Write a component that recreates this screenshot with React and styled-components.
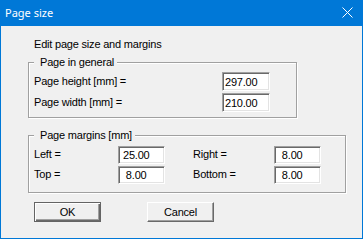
import React from "react";
import styled, { createGlobalStyle } from "styled-components";

const Global = createGlobalStyle`
  html, body {
    margin: 0;
    padding: 0;
    background: #ffffff;
  }
  * {
    box-sizing: border-box;
  }
`;

const Window = styled.div`
  width: 363px;
  height: 239px;
  border: 1px solid #0078d7;
  border-top: none;
  background: #f0f0f0;
  display: flex;
  flex-direction: column;
  font-family: "Liberation Sans", Arial, sans-serif;
  font-size: 11px;
  letter-spacing: -0.2px;
  color: #000;
`;

const TitleBar = styled.div`
  height: 26px;
  background: #0078d7;
  display: flex;
  align-items: center;
  justify-content: space-between;
  padding: 0 9px 1px 4px;
  color: #fff;
  font-family: "Noto Sans", "Liberation Sans", sans-serif;
  font-size: 11px;
  letter-spacing: 0;
`;

const Body = styled.div`
  flex: 1;
  display: flex;
  flex-direction: column;
  align-items: flex-start;
  padding-left: 27px;
`;

const Heading = styled.div`
  margin: 12px 0 0 6px;
  line-height: 13px;
`;

const Group = styled.fieldset`
  margin: ${(p) => p.$top}px 0 0 0;
  width: ${(p) => p.$width}px;
  min-inline-size: 0;
  padding: ${(p) => p.$pad};
  border: 1px solid #a0a0a0;
  box-shadow: 1px 1px 0 #fff, inset 1px 1px 0 #fff;
`;

const Legend = styled.legend`
  padding: 0 3px 0 6px;
  margin: 0;
  line-height: 13px;
  background: #f0f0f0;
`;

const Grid = styled.div`
  display: grid;
  grid-template-columns: ${(p) => p.$cols};
  grid-auto-rows: ${(p) => p.$row}px;
  row-gap: 2px;
  align-items: center;
`;

const Label = styled.span`
  line-height: 13px;
  padding-bottom: ${(p) => (p.$raise ? 2 : 0)}px;
`;

const Field = styled.input`
  width: ${(p) => p.$width}px;
  height: 100%;
  margin: 0;
  padding: 0 0 0 ${(p) => p.$indent}px;
  font: inherit;
  letter-spacing: inherit;
  color: #000;
  background: #fff;
  border: 1px solid;
  border-color: #a0a0a0 #fff #fff #a0a0a0;
  box-shadow: inset 1px 1px 0 #696969, inset -1px -1px 0 #e3e3e3;
  outline: none;
`;

const Buttons = styled.div`
  display: flex;
  gap: 46px;
  margin: 9px 0 0 6px;
`;

const Button = styled.button`
  width: 67px;
  height: 20px;
  margin: 0;
  padding: 0;
  font: inherit;
  letter-spacing: inherit;
  color: #000;
  background: #f0f0f0;
  border: 1px solid;
  border-color: ${(p) => (p.$default ? "#646464" : "#fff #696969 #696969 #fff")};
  box-shadow: ${(p) =>
    p.$default
      ? "inset 1px 1px 0 #fff, inset -1px -1px 0 #696969, inset -2px -2px 0 #a0a0a0"
      : "inset -1px -1px 0 #a0a0a0"};
`;

const CloseIcon = () => (
  <svg width="11" height="11" viewBox="0 0 11 11">
    <path d="M0.5 0.5 L10.5 10.5 M10.5 0.5 L0.5 10.5" stroke="#fff" strokeWidth="1" />
  </svg>
);

const App = () => {
  return (
    <>
      <Global />
      <Window>
        <TitleBar>
          <span>Page size</span>
          <CloseIcon />
        </TitleBar>
        <Body>
          <Heading>Edit page size and margins</Heading>
          <Group $top={5} $width={269} $pad="3px 5px 5px 5px">
            <Legend>Page in general</Legend>
            <Grid $cols="188px 48px" $row={19}>
              <Label>Page height [mm] =</Label>
              <Field $width={48} $indent={2} value="297.00" readOnly />
              <Label>Page width [mm] =</Label>
              <Field $width={48} $indent={2} value="210.00" readOnly />
            </Grid>
          </Group>
          <Group $top={11} $width={318} $pad="4px 5px 8px 5px">
            <Legend>Page margins [mm]</Legend>
            <Grid $cols="84px 75px 81px 47px" $row={18}>
              <Label $raise>Left =</Label>
              <Field $width={47} $indent={4} value="25.00" readOnly />
              <Label $raise>Right =</Label>
              <Field $width={47} $indent={4} value=" 8.00" readOnly />
              <Label $raise>Top =</Label>
              <Field $width={47} $indent={4} value=" 8.00" readOnly />
              <Label $raise>Bottom =</Label>
              <Field $width={47} $indent={4} value=" 8.00" readOnly />
            </Grid>
          </Group>
          <Buttons>
            <Button $default>OK</Button>
            <Button>Cancel</Button>
          </Buttons>
        </Body>
      </Window>
    </>
  );
};

export default App;
